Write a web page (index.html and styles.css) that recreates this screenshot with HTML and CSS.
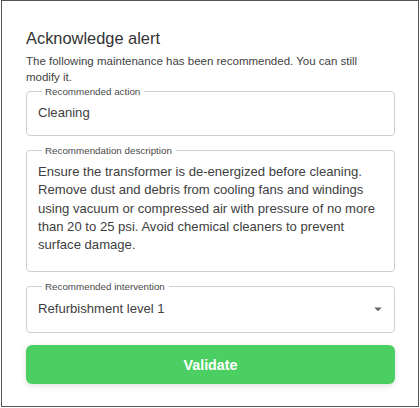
FILE: index.html
```html
<!DOCTYPE html>
<html lang="en">
<head>
  <meta charset="UTF-8" />
  <meta name="viewport" content="width=device-width, initial-scale=1.0"/>
  <title>Acknowledge alert</title>
  <link rel="stylesheet" href="styles.css">
</head>
<body>
  <div class="dialog">
    <h2 class="title">Acknowledge alert</h2>
    <p class="intro">The following maintenance has been recommended. You can still modify it.</p>

    <fieldset class="field">
      <legend>Recommended action</legend>
      <div class="value">Cleaning</div>
    </fieldset>

    <fieldset class="field field-multi">
      <legend>Recommendation description</legend>
      <div class="value">Ensure the transformer is de-energized before cleaning. Remove dust and debris from cooling fans and windings using vacuum or compressed air with pressure of no more than 20 to 25 psi. Avoid chemical cleaners to prevent surface damage.</div>
    </fieldset>

    <fieldset class="field field-select">
      <legend>Recommended intervention</legend>
      <div class="select-row">
        <div class="value">Refurbishment level 1</div>
        <svg class="caret" width="18" height="18" viewBox="0 0 24 24"><path d="M7 10l5 5 5-5z"/></svg>
      </div>
    </fieldset>

    <button class="validate">Validate</button>
  </div>
</body>
</html>
```

FILE: styles.css
```css
* { box-sizing: border-box; }

body {
  margin: 0;
  background: #fff;
  font-family: "Liberation Sans", Arial, sans-serif;
  color: #3a3a3a;
}

.dialog {
  width: 418px;
  height: 407px;
  margin-left: 1px;
  border: 1.5px solid #555;
  padding: 28px 23px 0 24px;
}

.title {
  margin: 0;
  font-size: 16.4px;
  line-height: 19px;
  font-weight: normal;
  color: #333;
}

.intro {
  margin: 4.5px 28px 0 0;
  font-size: 11.5px;
  line-height: 16px;
  color: #3f3f3f;
}

.field {
  margin: 1.5px 0 0;
  padding: 7px 12px 13px 11px;
  border: 1px solid #d0d0d0;
  border-radius: 4px;
  min-width: 0;
}

.field + .field {
  margin-top: 9px;
}

.field legend {
  margin-left: 4px;
  padding: 0 4px 0 3px;
  font-size: 9.8px;
  line-height: 11px;
  color: #4a4a4a;
}

.value {
  font-size: 13.1px;
  line-height: 18px;
  color: #404040;
}

.field-multi {
  padding-bottom: 17px;
}

.field-multi .value {
  line-height: 18.25px;
}

.field-select {
  margin-top: 8px;
  padding-top: 8px;
  padding-bottom: 14px;
}

.select-row {
  display: flex;
  align-items: center;
  justify-content: space-between;
}

.caret {
  fill: #666;
  margin-right: -5px;
}

.validate {
  display: block;
  width: 100%;
  height: 39px;
  margin-top: 12px;
  border: none;
  border-radius: 6px;
  background: #4bcf63;
  color: #fff;
  font-family: inherit;
  font-size: 14.3px;
  font-weight: bold;
  box-shadow: 0 2px 6px rgba(0, 0, 0, 0.12);
}
```
